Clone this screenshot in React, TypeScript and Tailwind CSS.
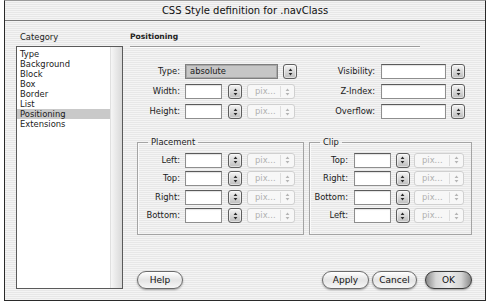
import React from "react";

function Arrows({ light = false }: { light?: boolean }) {
  const c = light ? "#b4b4b4" : "#2a2a2a";
  return (
    <svg width="5" height="8" viewBox="0 0 5 8">
      <path d="M2.5 0.6 L4.4 3 L0.6 3 Z" fill={c} />
      <path d="M0.6 5 L4.4 5 L2.5 7.4 Z" fill={c} />
    </svg>
  );
}

function Stepper() {
  return (
    <div className="w-[14px] h-[15px] shrink-0 rounded-[3px] border border-[#5e5e5e] bg-gradient-to-b from-[#f4f4f4] via-[#d9d9d9] to-[#bdbdbd] flex items-center justify-center shadow-[inset_0_0_0_1px_rgba(255,255,255,0.5)]">
      <Arrows />
    </div>
  );
}

function Input({ w = 37 }: { w?: number }) {
  return (
    <div
      className="h-[15px] shrink-0 bg-white border border-[#8e8e8e] border-t-[#5a5a5a] shadow-[inset_0_1px_1px_rgba(0,0,0,0.12)]"
      style={{ width: w }}
    />
  );
}

function Pix({ w = 48 }: { w?: number }) {
  return (
    <div
      className="h-[15px] shrink-0 rounded-[3px] border border-[#d0d0d0] bg-[#f7f7f7] flex items-center text-[#b0b0b0]"
      style={{ width: w }}
    >
      <span className="pl-[7px] flex-1 leading-none">pix...</span>
      <div className="w-px h-[11px] bg-[#dedede]" />
      <div className="w-[13px] flex justify-center">
        <Arrows light />
      </div>
    </div>
  );
}

function AquaButton({ label, w, def = false }: { label: string; w: number; def?: boolean }) {
  return (
    <div
      className={
        "h-[18px] rounded-full flex items-center justify-center shadow-[0_1px_2px_rgba(0,0,0,0.35)] " +
        (def
          ? "border border-[#3a3a3a] bg-[linear-gradient(90deg,#8a8a8a_0%,#d6d6d6_22%,#ececec_50%,#d6d6d6_78%,#8a8a8a_100%)]"
          : "border border-[#6a6a6a] bg-gradient-to-b from-[#ffffff] via-[#e4e4e4] to-[#f6f6f6]")
      }
      style={{ width: w }}
    >
      <span className="text-[9px] text-[#111] leading-none">{label}</span>
    </div>
  );
}

const categories = ["Type", "Background", "Block", "Box", "Border", "List", "Positioning", "Extensions"];

export default function App() {
  return (
    <div className="w-[490px] h-[305px] bg-white font-['DejaVu_Sans',sans-serif] text-[8.4px] text-[#1a1a1a] overflow-hidden">
      <div className="ml-[4px] w-[482px] h-[301px] border border-[#2a2a2a] border-t-[#9a9a9a] bg-[repeating-linear-gradient(180deg,#f4f4f4_0px,#f4f4f4_1px,#e7e7e7_1px,#e7e7e7_2px)] flex flex-col">
        {/* title bar */}
        <div className="h-[20px] shrink-0 border-b border-[#7a7a7a] flex items-center justify-center">
          <span className="text-[10px] text-[#111] leading-none">CSS Style definition for .navClass</span>
        </div>

        <div className="flex flex-1 pt-[10px] pl-[11px]">
          {/* left column */}
          <div className="w-[107px] flex flex-col">
            <div className="h-[12px] pl-[4px] leading-[12px] text-[#222]">Category</div>
            <div className="mt-[3px] h-[243px] bg-white border border-[#5a5a5a] flex">
              <div className="flex-1 flex flex-col pt-[2px]">
                {categories.map((c) => (
                  <div
                    key={c}
                    className={
                      "h-[10px] leading-[10px] pl-[3px] " + (c === "Positioning" ? "bg-[#c9c9c9]" : "")
                    }
                  >
                    {c}
                  </div>
                ))}
              </div>
              <div className="w-[12px] bg-gradient-to-r from-[#f6f6f6] to-[#d9d9d9] border-l border-[#e0e0e0]" />
            </div>
          </div>

          {/* right column */}
          <div className="ml-[7px] w-[342px] flex flex-col">
            <div className="h-[12px] leading-[12px] font-bold text-[7.6px] text-[#222]">Positioning</div>
            <div className="mt-[3px] w-[290px] h-[2px] border-t border-[#9c9c9c] bg-white" />

            {/* top rows */}
            <div className="mt-[16px] flex">
              <div className="w-[167px] flex flex-col gap-[5px]">
                <div className="flex items-center gap-[5px]">
                  <div className="w-[50px] text-right">Type:</div>
                  <div className="w-[93px] h-[15px] bg-[#c6c6c6] border border-[#7e7e7e] shadow-[inset_0_0_0_1px_#a8a8a8] flex items-center pl-[4px]">
                    absolute
                  </div>
                  <Stepper />
                </div>
                <div className="flex items-center">
                  <div className="w-[50px] text-right">Width:</div>
                  <div className="ml-[5px]"><Input /></div>
                  <div className="ml-[6px]"><Stepper /></div>
                  <div className="ml-[5px]"><Pix /></div>
                </div>
                <div className="flex items-center">
                  <div className="w-[50px] text-right">Height:</div>
                  <div className="ml-[5px]"><Input /></div>
                  <div className="ml-[6px]"><Stepper /></div>
                  <div className="ml-[5px]"><Pix /></div>
                </div>
              </div>
              <div className="ml-[13px] flex flex-col gap-[5px]">
                {["Visibility:", "Z-Index:", "Overflow:"].map((l) => (
                  <div key={l} className="flex items-center">
                    <div className="w-[65px] text-right">{l}</div>
                    <div className="ml-[6px]"><Input w={65} /></div>
                    <div className="ml-[5px]"><Stepper /></div>
                  </div>
                ))}
              </div>
            </div>

            {/* group boxes */}
            <div className="mt-[17px] flex">
              <fieldset className="ml-[7px] w-[168px] h-[99px] border border-[#a4a4a4] shadow-[inset_1px_1px_0_#fafafa] px-0">
                <legend className="ml-[10px] px-[3px] h-[12px] leading-[12px] text-[#222]">Placement</legend>
                <div className="mt-[5px] flex flex-col gap-[4.5px]">
                  {["Left:", "Top:", "Right:", "Bottom:"].map((l) => (
                    <div key={l} className="flex items-center h-[14px]">
                      <div className="w-[42px] text-right">{l}</div>
                      <div className="ml-[5px]"><Input /></div>
                      <div className="ml-[6px]"><Stepper /></div>
                      <div className="ml-[5px]"><Pix /></div>
                    </div>
                  ))}
                </div>
              </fieldset>
              <fieldset className="ml-[5px] w-[164px] h-[99px] border border-[#a4a4a4] shadow-[inset_1px_1px_0_#fafafa] px-0">
                <legend className="ml-[10px] px-[3px] h-[12px] leading-[12px] text-[#222]">Clip</legend>
                <div className="mt-[5px] flex flex-col gap-[4.5px]">
                  {["Top:", "Right:", "Bottom:", "Left:"].map((l) => (
                    <div key={l} className="flex items-center h-[14px]">
                      <div className="w-[38px] text-right">{l}</div>
                      <div className="ml-[6px]"><Input /></div>
                      <div className="ml-[5px]"><Stepper /></div>
                      <div className="ml-[4px]"><Pix w={50} /></div>
                    </div>
                  ))}
                </div>
              </fieldset>
            </div>

            {/* buttons */}
            <div className="mt-[36px] flex items-center">
              <div className="ml-[7px]"><AquaButton label="Help" w={46} /></div>
              <div className="ml-auto flex items-center">
                <AquaButton label="Apply" w={47} />
                <div className="ml-[3px]"><AquaButton label="Cancel" w={45} /></div>
                <div className="ml-[8px]"><AquaButton label="OK" w={47} def /></div>
              </div>
            </div>
          </div>
        </div>
      </div>
    </div>
  );
}
